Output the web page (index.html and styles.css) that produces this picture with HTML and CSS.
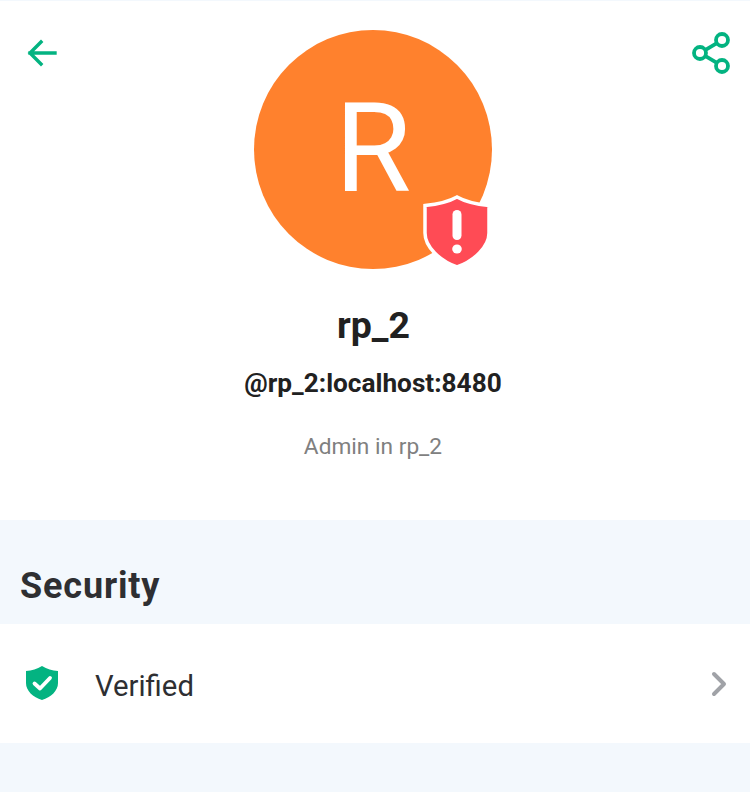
FILE: index.html
```html
<!DOCTYPE html>
<html lang="en">
<head>
    <meta charset="UTF-8">
    <meta name="viewport" content="width=device-width, initial-scale=1.0">
    <title>rp_2</title>
    <link rel="stylesheet" href="styles.css">
</head>
<body>
    <header class="profile">
        <div class="toolbar">
            <svg class="icon-back" width="34" height="34" viewBox="0 0 34 34" fill="none" stroke="#03b381" stroke-width="3.400" stroke-linecap="square">
                <path d="M30 17H5M16 6 5 17l11 11"/>
            </svg>
            <svg class="icon-share" width="42" height="44" viewBox="0 0 42 44" fill="none" stroke="#03b381" stroke-width="3.800">
                <circle cx="31" cy="9" r="6"/>
                <circle cx="9" cy="22" r="6"/>
                <circle cx="31" cy="35" r="6"/>
                <path d="M14.500 18.800 25.500 12.300M14.500 25.200 25.500 31.700"/>
            </svg>
        </div>

        <div class="avatar">
            <span class="avatar-letter">R</span>
            <svg class="badge" width="70" height="74" viewBox="0 0 70 74">
                <path d="M35 2 C42 6 52 9 67 10.500 V38 C67 52 52 66 35 72 C18 66 3 52 3 38 V10.500 C18 9 28 6 35 2Z" fill="#ff4b55" stroke="#fff" stroke-width="3.500"/>
                <rect x="30.500" y="15" width="9" height="30" rx="4.500" fill="#fff"/>
                <ellipse cx="35" cy="54" rx="4.800" ry="4.500" fill="#fff"/>
            </svg>
        </div>

        <h1 class="name">rp_2</h1>
        <p class="user-id">@rp_2:localhost:8480</p>
        <p class="role">Admin in rp_2</p>
    </header>

    <section class="security">
        <h2 class="section-title">Security</h2>
        <div class="row">
            <svg class="icon-verified" width="34" height="36" viewBox="0 0 34 36">
                <path d="M17 1 C22 4 27 5.500 33 6 V18 C33 26 26 32 17 35 C8 32 1 26 1 18 V6 C7 5.500 12 4 17 1Z" fill="#03b381"/>
                <path d="M9.500 18.500 15 23.500 25 13" fill="none" stroke="#fff" stroke-width="3.800" stroke-linecap="round" stroke-linejoin="round"/>
            </svg>
            <span class="row-label">Verified</span>
            <svg class="icon-chevron" width="18" height="26" viewBox="0 0 18 26" fill="none" stroke="#a0a2a7" stroke-width="4" stroke-linecap="round" stroke-linejoin="round">
                <path d="M3 3 13 13 3 23"/>
            </svg>
        </div>
    </section>
</body>
</html>
```

FILE: styles.css
```css
* {
    box-sizing: border-box;
}
body {
    margin: 0;
    height: 792px;
    overflow: hidden;
    font-family: Roboto, "Liberation Sans", sans-serif;
    background-color: #f3f8fd;
}
.profile {
    height: 520px;
    padding-top: 29px;
    border-top: 1px solid #f3f8fd;
    background-color: #fff;
    position: relative;
    display: flex;
    flex-direction: column;
    align-items: center;
}
.toolbar {
    position: absolute;
    top: 30px;
    left: 0;
    right: 0;
    padding: 0 17px 0 25px;
    display: flex;
    justify-content: space-between;
    align-items: flex-start;
}
.icon-back {
    margin-top: 5px;
}
.avatar {
    width: 238px;
    height: 239px;
    margin-left: -4px;
    border-radius: 50%;
    background-color: #ff812d;
    position: relative;
    display: flex;
    align-items: center;
    justify-content: center;
}
.avatar-letter {
    color: #fff;
    font-size: 124px;
    line-height: 1;
    font-weight: 400;
    margin-top: -2px;
}
.badge {
    position: absolute;
    left: 168px;
    top: 165px;
}
.name {
    margin: 34px 0 0 -3px;
    font-size: 37.500px;
    line-height: 44px;
    font-weight: 700;
    color: #212121;
}
.user-id {
    margin: 21px 0 0 -4px;
    font-size: 26.200px;
    line-height: 30px;
    font-weight: 700;
    color: #212121;
}
.role {
    margin: 35px 0 0 -4px;
    font-size: 22.700px;
    line-height: 28px;
    color: #808080;
}
.section-title {
    margin: 0;
    height: 104px;
    padding: 44px 20px 0;
    font-size: 36px;
    line-height: 44px;
    font-weight: 700;
    letter-spacing: 0.850px;
    color: #2e2f32;
}
.row {
    height: 119px;
    background-color: #fff;
    padding: 0 21px 0 25px;
    display: flex;
    align-items: center;
}
.row-label {
    margin-left: 36px;
    flex: 1;
    font-size: 29.300px;
    line-height: 34px;
    padding-top: 5px;
    color: #2e2f32;
}
.icon-verified {
    margin-top: -2px;
}
```
